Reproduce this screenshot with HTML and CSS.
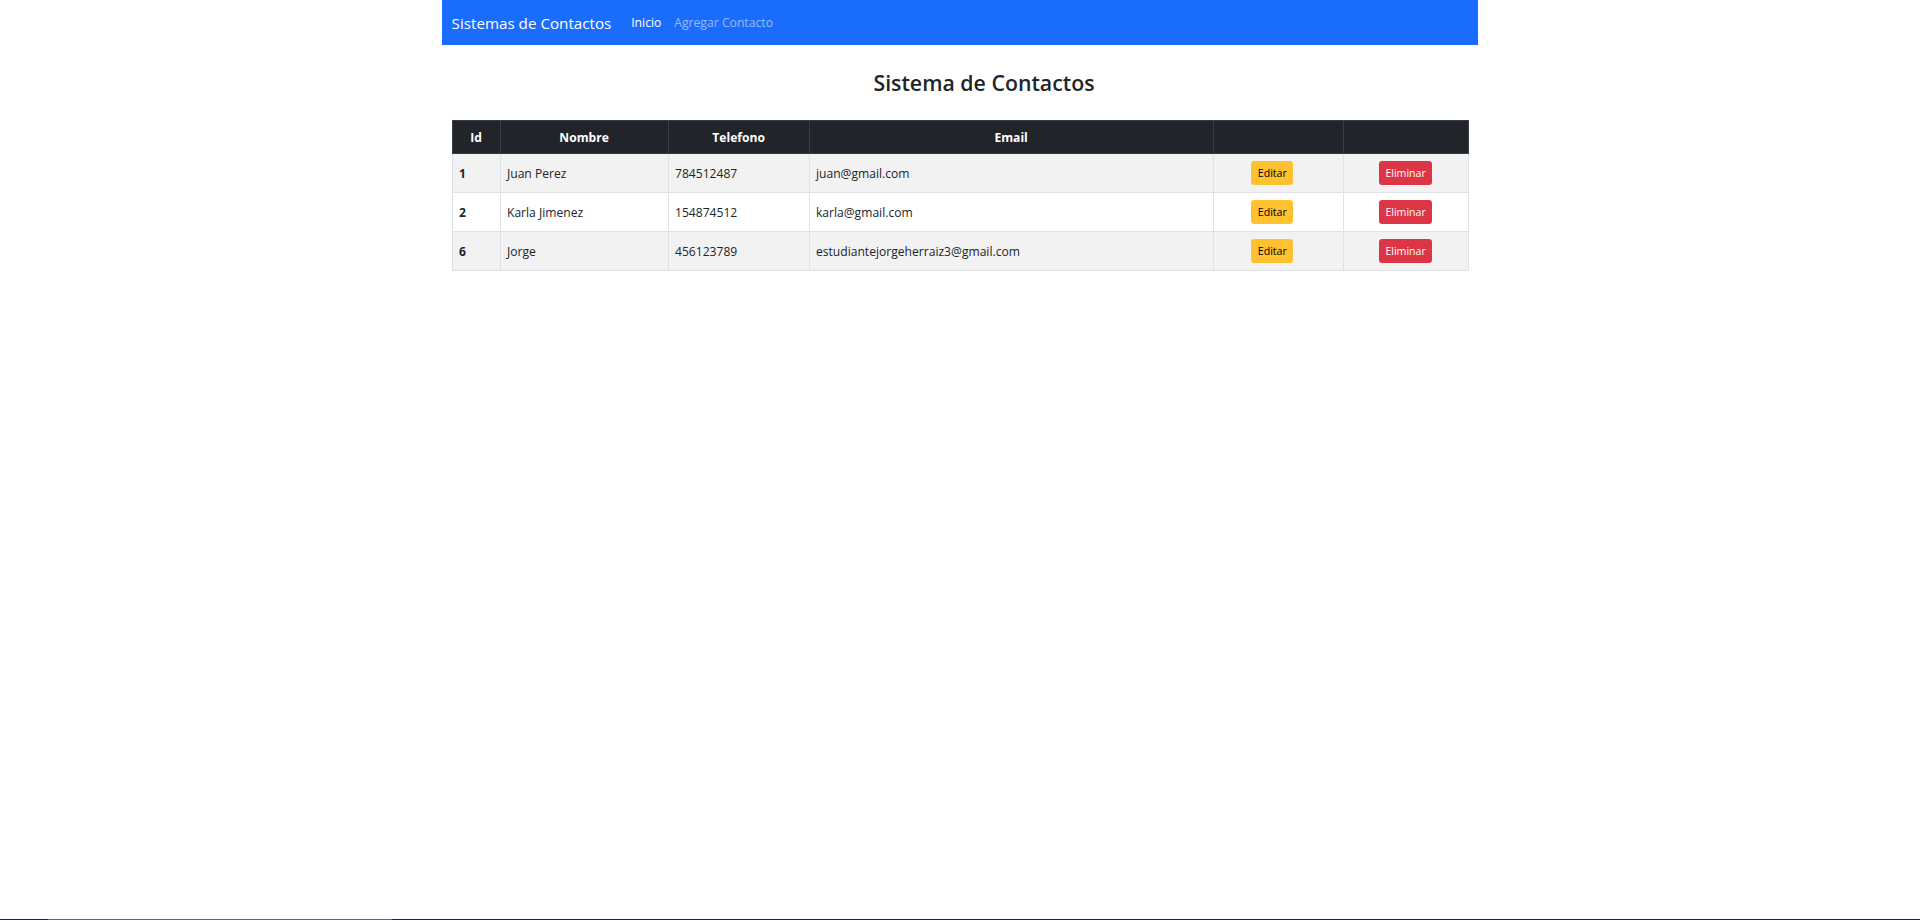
FILE: index.html
```html
<!DOCTYPE html>
<html lang="es">
<head>
<meta charset="utf-8">
<title>Sistema de Contactos</title>
<link rel="stylesheet" href="styles.css">
</head>
<body>
<div class="screen">
  <div class="page">
    <nav class="navbar">
      <a class="brand" href="#">Sistemas de Contactos</a>
      <a class="nav-link active" href="#">Inicio</a>
      <a class="nav-link" href="#">Agregar Contacto</a>
    </nav>
    <main class="container">
      <h3 class="title">Sistema de Contactos</h3>
      <table class="table">
        <colgroup>
          <col class="c-id"><col class="c-nombre"><col class="c-tel"><col class="c-email"><col class="c-edit"><col class="c-del">
        </colgroup>
        <thead>
          <tr><th>Id</th><th>Nombre</th><th>Telefono</th><th>Email</th><th></th><th></th></tr>
        </thead>
        <tbody>
          <tr class="odd"><td class="id">1</td><td>Juan Perez</td><td>784512487</td><td>juan@gmail.com</td><td class="act edit"><a class="btn btn-warning" href="#">Editar</a></td><td class="act"><a class="btn btn-danger" href="#">Eliminar</a></td></tr>
          <tr><td class="id">2</td><td>Karla Jimenez</td><td>154874512</td><td>karla@gmail.com</td><td class="act edit"><a class="btn btn-warning" href="#">Editar</a></td><td class="act"><a class="btn btn-danger" href="#">Eliminar</a></td></tr>
          <tr class="odd"><td class="id">6</td><td>Jorge</td><td>456123789</td><td>estudiantejorgeherraiz3@gmail.com</td><td class="act edit"><a class="btn btn-warning" href="#">Editar</a></td><td class="act"><a class="btn btn-danger" href="#">Eliminar</a></td></tr>
        </tbody>
      </table>
    </main>
  </div>
  <div class="taskbar"><span class="tb-a"></span><span class="tb-b"></span><span class="tb-c"></span></div>
</div>
</body>
</html>
```
FILE: styles.css
```css
html, body {
  margin: 0;
  padding: 0;
  background: #fff;
}
body {
  font-family: "Open Sans", "Noto Sans", sans-serif;
  font-size: 12.1px;
  color: #212529;
}
.screen {
  height: 920px;
  display: flex;
  flex-direction: column;
  overflow: hidden;
}
.page {
  width: 1036px;
  margin: 0 auto;
}
.navbar {
  height: 45px;
  background: #1a6cfb;
  display: flex;
  align-items: center;
  padding: 0 9.6px;
}
.brand {
  color: #fff;
  font-size: 15.2px;
  text-decoration: none;
  margin-right: 13.5px;
}
.nav-link {
  color: rgba(255, 255, 255, 0.55);
  text-decoration: none;
  padding: 0 6.4px;
  font-size: 12.2px;
}
.nav-link.active {
  color: #fff;
}
.container {
  padding: 0 9.6px;
}
.title {
  margin: 24px 0 0 0;
  padding-left: 48px;
  height: 51px;
  text-align: center;
  font-size: 21.3px;
  font-weight: 600;
  line-height: 27px;
  color: #212529;
}
.table {
  width: 1016px;
  border-collapse: collapse;
  table-layout: fixed;
  border: 1px solid #dee2e6;
}
.c-id { width: 48px; }
.c-nombre { width: 168px; }
.c-tel { width: 141px; }
.c-email { width: 404px; }
.c-edit { width: 130px; }
.c-del { width: 125px; }
.table th {
  background: #212529;
  color: #fff;
  font-weight: 700;
  height: 33px;
  padding: 0 6.4px;
  text-align: center;
  border: 1px solid #3a3e42;
  box-sizing: border-box;
}
.table td {
  height: 39px;
  padding: 0 6.4px;
  border: 1px solid #dee2e6;
  box-sizing: border-box;
  vertical-align: middle;
}
.table tr.odd td {
  background: #f2f2f2;
}
.table td.id {
  font-weight: 700;
}
.table td.act {
  text-align: center;
}
.table td.edit {
  padding-right: 18px;
}
.btn {
  display: inline-block;
  font-size: 10.6px;
  line-height: 18px;
  padding: 3.2px 6.4px;
  border-radius: 3.2px;
  text-decoration: none;
  vertical-align: middle;
}
.btn-warning {
  background: #ffc12f;
  color: #000;
}
.btn-danger {
  background: #dc3545;
  color: #fff;
}
.taskbar {
  margin-top: auto;
  height: 1px;
  display: flex;
  background: #1b2a33;
}
.tb-a { width: 48px; background: #1b2a33; }
.tb-b { width: 344px; background: #5b6a6e; }
.tb-c { flex: 1; background: #1b2a33; }
```
